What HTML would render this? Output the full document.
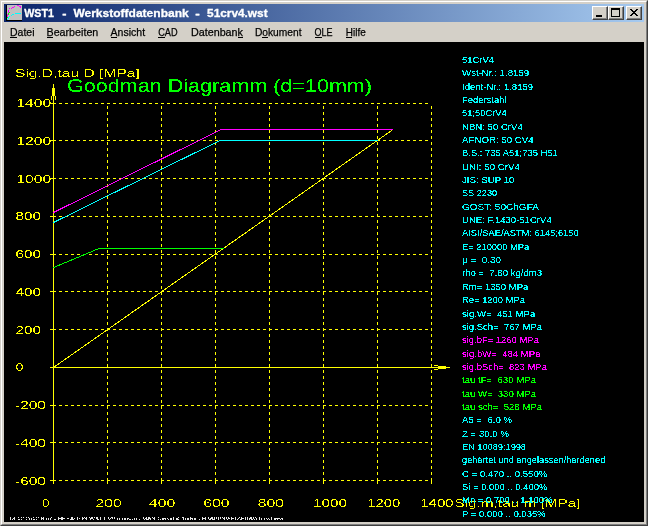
<!DOCTYPE html>
<html><head><meta charset="utf-8"><title>WST1 - Werkstoffdatenbank - 51crv4.wst</title>
<style>
html,body{margin:0;padding:0}
body{width:648px;height:526px;overflow:hidden;background:#d4d0c8;position:relative;font-family:"Liberation Sans",sans-serif}
.frame{position:absolute;left:0;top:0;width:646px;height:524px;border-right:1px solid #404040;border-bottom:1px solid #404040;border-left:1px solid #d4d0c8;border-top:1px solid #d4d0c8;box-sizing:content-box;width:646px;height:524px}
.frame2{position:absolute;left:1px;top:1px;width:644px;height:522px;border-left:1px solid #fff;border-top:1px solid #fff;border-right:1px solid #808080;border-bottom:1px solid #808080}
.title{position:absolute;left:4px;top:4px;width:640px;height:18px;background:linear-gradient(to right,#0a246a,#a6caf0)}
.ttext{position:absolute;left:24px;top:4px;height:18px;line-height:18px;color:#fff;font-weight:bold;font-size:11.5px;white-space:pre;transform-origin:0 50%}
.icon{position:absolute;left:6px;top:5px;width:16px;height:16px}
.btn{position:absolute;top:6px;width:16px;height:14px;background:#d4d0c8;box-sizing:border-box;border-top:1px solid #fff;border-left:1px solid #fff;border-right:1px solid #404040;border-bottom:1px solid #404040}
.btn:after{content:"";position:absolute;left:0;top:0;right:0;bottom:0;border-right:1px solid #808080;border-bottom:1px solid #808080}
.menu{position:absolute;left:4px;top:22px;width:640px;height:20px;background:#d4d0c8}
.mi{position:absolute;top:23px;height:18px;line-height:18px;font-size:11px;color:#000;white-space:nowrap}
.mi u{text-decoration:underline}
.client{position:absolute;left:4px;top:42px;width:640px;height:480px;background:#000}
svg{position:absolute;left:0;top:0}
svg text{font-family:"Liberation Sans",sans-serif;white-space:pre}
</style></head><body>
<div class="frame"></div><div class="frame2"></div>
<div class="title"></div>
<svg class="icon" width="16" height="16" viewBox="0 0 16 16" shape-rendering="crispEdges"><rect x="0" y="0" width="16" height="16" fill="#c0c0c0"/><rect x="0" y="0" width="1" height="16" fill="#000"/><rect x="0" y="15" width="16" height="1" fill="#000"/><rect x="11" y="0" width="2" height="1" fill="#f0f"/><rect x="13" y="1" width="1" height="1" fill="#f0f"/><rect x="14" y="1" width="1" height="2" fill="#f0f"/><rect x="8" y="1" width="1" height="1" fill="#f0f"/><rect x="6" y="2" width="2" height="1" fill="#f0f"/><rect x="5" y="3" width="1" height="1" fill="#f0f"/><rect x="3" y="3" width="1" height="1" fill="#f0f"/><rect x="2" y="5" width="1" height="3" fill="#f0f"/><rect x="1" y="9" width="1" height="3" fill="#f0f"/><rect x="3" y="7" width="1" height="1" fill="#0f0"/><rect x="2" y="8" width="1" height="2" fill="#0f0"/><rect x="1" y="12" width="1" height="1" fill="#0f0"/><rect x="9" y="8" width="6" height="1" fill="#0ff"/><rect x="6" y="9" width="2" height="1" fill="#0ff"/><rect x="5" y="10" width="1" height="1" fill="#0ff"/><rect x="3" y="11" width="1" height="1" fill="#0ff"/><rect x="2" y="12" width="1" height="2" fill="#0ff"/><rect x="1" y="14" width="1" height="1" fill="#0ff"/></svg>
<div class="btn" style="left:592px"><svg width="14" height="12" shape-rendering="crispEdges"><rect x="3" y="8" width="6" height="2" fill="#000"/></svg></div>
<div class="btn" style="left:608px"><svg width="14" height="12" shape-rendering="crispEdges"><rect x="2" y="1" width="8" height="8" fill="none" stroke="#000" stroke-width="1" transform="translate(.5,.5)"/><rect x="2" y="1" width="9" height="2" fill="#000"/></svg></div>
<div class="btn" style="left:626px"><svg width="14" height="12" shape-rendering="crispEdges"><path d="M3 2h2v1h1v1h2v-1h1v-1h2v1h-1v1h-1v1h-1v1h1v1h1v1h1v1h-2v-1h-1v-1h-2v1h-1v1h-2v-1h1v-1h1v-1h1v-1h-1v-1h-1v-1h-1z" fill="#000"/></svg></div>
<div class="menu"></div>

<div class="client"></div>
<svg width="648" height="526" viewBox="0 0 648 526" xml:space="preserve">
<defs><filter id="cr" x="0" y="0" width="100%" height="100%" filterUnits="userSpaceOnUse" color-interpolation-filters="sRGB"><feComponentTransfer><feFuncA type="discrete" tableValues="0 0 0 0 1 1 1 1 1 1"/></feComponentTransfer></filter><filter id="cy" x="0" y="0" width="100%" height="100%" filterUnits="userSpaceOnUse" color-interpolation-filters="sRGB"><feComponentTransfer><feFuncA type="discrete" tableValues="0 0 0 0 0 0 1 1 1 1 1"/></feComponentTransfer></filter><filter id="nf" x="0" y="0" width="100%" height="100%" filterUnits="userSpaceOnUse"><feOffset dx="0" dy="0"/></filter></defs>
<g shape-rendering="crispEdges" stroke-width="1">
<line x1="107.5" y1="106" x2="107.5" y2="481" stroke="#ff0" stroke-dasharray="3 3"/>
<line x1="107.5" y1="480" x2="107.5" y2="484" stroke="#ff0"/>
<line x1="161.5" y1="106" x2="161.5" y2="481" stroke="#ff0" stroke-dasharray="3 3"/>
<line x1="161.5" y1="480" x2="161.5" y2="484" stroke="#ff0"/>
<line x1="215.5" y1="106" x2="215.5" y2="481" stroke="#ff0" stroke-dasharray="3 3"/>
<line x1="215.5" y1="480" x2="215.5" y2="484" stroke="#ff0"/>
<line x1="269.5" y1="106" x2="269.5" y2="481" stroke="#ff0" stroke-dasharray="3 3"/>
<line x1="269.5" y1="480" x2="269.5" y2="484" stroke="#ff0"/>
<line x1="323.5" y1="106" x2="323.5" y2="481" stroke="#ff0" stroke-dasharray="3 3"/>
<line x1="323.5" y1="480" x2="323.5" y2="484" stroke="#ff0"/>
<line x1="377.5" y1="106" x2="377.5" y2="481" stroke="#ff0" stroke-dasharray="3 3"/>
<line x1="377.5" y1="480" x2="377.5" y2="484" stroke="#ff0"/>
<line x1="431.5" y1="106" x2="431.5" y2="481" stroke="#ff0" stroke-dasharray="3 3"/>
<line x1="431.5" y1="480" x2="431.5" y2="484" stroke="#ff0"/>
<line x1="53" y1="480.5" x2="431" y2="480.5" stroke="#ff0" stroke-dasharray="3 3"/>
<line x1="50" y1="480.5" x2="54" y2="480.5" stroke="#ff0"/>
<line x1="53" y1="442.5" x2="431" y2="442.5" stroke="#ff0" stroke-dasharray="3 3"/>
<line x1="50" y1="442.5" x2="54" y2="442.5" stroke="#ff0"/>
<line x1="53" y1="405.5" x2="431" y2="405.5" stroke="#ff0" stroke-dasharray="3 3"/>
<line x1="50" y1="405.5" x2="54" y2="405.5" stroke="#ff0"/>
<line x1="53" y1="329.5" x2="431" y2="329.5" stroke="#ff0" stroke-dasharray="3 3"/>
<line x1="50" y1="329.5" x2="54" y2="329.5" stroke="#ff0"/>
<line x1="53" y1="291.5" x2="431" y2="291.5" stroke="#ff0" stroke-dasharray="3 3"/>
<line x1="50" y1="291.5" x2="54" y2="291.5" stroke="#ff0"/>
<line x1="53" y1="254.5" x2="431" y2="254.5" stroke="#ff0" stroke-dasharray="3 3"/>
<line x1="50" y1="254.5" x2="54" y2="254.5" stroke="#ff0"/>
<line x1="53" y1="216.5" x2="431" y2="216.5" stroke="#ff0" stroke-dasharray="3 3"/>
<line x1="50" y1="216.5" x2="54" y2="216.5" stroke="#ff0"/>
<line x1="53" y1="178.5" x2="431" y2="178.5" stroke="#ff0" stroke-dasharray="3 3"/>
<line x1="50" y1="178.5" x2="54" y2="178.5" stroke="#ff0"/>
<line x1="53" y1="140.5" x2="431" y2="140.5" stroke="#ff0" stroke-dasharray="3 3"/>
<line x1="50" y1="140.5" x2="54" y2="140.5" stroke="#ff0"/>
<line x1="53" y1="103.5" x2="431" y2="103.5" stroke="#ff0" stroke-dasharray="3 3"/>
<line x1="50" y1="103.5" x2="54" y2="103.5" stroke="#ff0"/>
<line x1="53.5" y1="84" x2="53.5" y2="484" stroke="#ff0"/>
<line x1="50" y1="367.5" x2="450" y2="367.5" stroke="#ff0"/>
<rect x="52" y="88" width="3" height="8" fill="#ff0"/>
<rect x="51" y="96" width="1" height="4" fill="#ff0"/><rect x="55" y="96" width="1" height="4" fill="#ff0"/>
<rect x="438" y="366" width="8" height="3" fill="#ff0"/>
<rect x="434" y="365" width="4" height="1" fill="#ff0"/><rect x="434" y="369" width="4" height="1" fill="#ff0"/>
<polyline fill="none" stroke="#ff0" points="53.5,367.5 393,129.5"/>
<polyline fill="none" stroke="#0ff" points="53.5,222.5 220,140.5 377.5,140.5"/>
<polyline fill="none" stroke="#f0f" points="53.5,212.5 221,129.5 393,129.5"/>
<polyline fill="none" stroke="#0f0" points="53.5,267.5 99,248.5 223.5,248.5"/>
</g>
<g filter="url(#nf)">
<text x="10" y="35.7" fill="#000" stroke="#000" stroke-width="0.25" font-size="10.8" textLength="24.5" lengthAdjust="spacingAndGlyphs">Datei</text>
<rect x="10" y="37" width="7" height="1" fill="#000" shape-rendering="crispEdges"/>
<text x="46.5" y="35.7" fill="#000" stroke="#000" stroke-width="0.25" font-size="10.8" textLength="51.8" lengthAdjust="spacingAndGlyphs">Bearbeiten</text>
<rect x="47" y="37" width="6" height="1" fill="#000" shape-rendering="crispEdges"/>
<text x="110.6" y="35.7" fill="#000" stroke="#000" stroke-width="0.25" font-size="10.8" textLength="34.5" lengthAdjust="spacingAndGlyphs">Ansicht</text>
<rect x="111" y="37" width="6" height="1" fill="#000" shape-rendering="crispEdges"/>
<text x="158.2" y="35.7" fill="#000" stroke="#000" stroke-width="0.25" font-size="10.8" textLength="19.4" lengthAdjust="spacingAndGlyphs">CAD</text>
<rect x="158" y="37" width="7" height="1" fill="#000" shape-rendering="crispEdges"/>
<text x="190.9" y="35.7" fill="#000" stroke="#000" stroke-width="0.25" font-size="10.8" textLength="52.1" lengthAdjust="spacingAndGlyphs">Datenbank</text>
<rect x="238" y="37" width="5" height="1" fill="#000" shape-rendering="crispEdges"/>
<text x="254.9" y="35.7" fill="#000" stroke="#000" stroke-width="0.25" font-size="10.8" textLength="46.6" lengthAdjust="spacingAndGlyphs">Dokument</text>
<rect x="262" y="37" width="6" height="1" fill="#000" shape-rendering="crispEdges"/>
<text x="314.5" y="35.7" fill="#000" stroke="#000" stroke-width="0.25" font-size="10.8" textLength="18.1" lengthAdjust="spacingAndGlyphs">OLE</text>
<rect x="315" y="37" width="7" height="1" fill="#000" shape-rendering="crispEdges"/>
<text x="345.8" y="35.7" fill="#000" stroke="#000" stroke-width="0.25" font-size="10.8" textLength="19.9" lengthAdjust="spacingAndGlyphs">Hilfe</text>
<rect x="346" y="37" width="6" height="1" fill="#000" shape-rendering="crispEdges"/>
<text x="24.2" y="17" fill="#fff" stroke="#fff" stroke-width="0.3" font-weight="bold" font-size="11.5" textLength="29.8" lengthAdjust="spacingAndGlyphs">WST1</text>
<text x="62.2" y="17" fill="#fff" stroke="#fff" stroke-width="0.3" font-weight="bold" font-size="11.5" textLength="4.2" lengthAdjust="spacingAndGlyphs">-</text>
<text x="73.4" y="17" fill="#fff" stroke="#fff" stroke-width="0.3" font-weight="bold" font-size="11.5" textLength="115.3" lengthAdjust="spacingAndGlyphs">Werkstoffdatenbank</text>
<text x="195.2" y="17" fill="#fff" stroke="#fff" stroke-width="0.3" font-weight="bold" font-size="11.5" textLength="4.5" lengthAdjust="spacingAndGlyphs">-</text>
<text x="207.1" y="17" fill="#fff" stroke="#fff" stroke-width="0.3" font-weight="bold" font-size="11.5" textLength="60.5" lengthAdjust="spacingAndGlyphs">51crv4.wst</text>
</g>
<g filter="url(#cy)">
<text x="16.2" y="107.0" fill="#ff0" font-size="11.2" textLength="35" lengthAdjust="spacingAndGlyphs">1400</text>
<text x="16.2" y="144.8" fill="#ff0" font-size="11.2" textLength="35" lengthAdjust="spacingAndGlyphs">1200</text>
<text x="16.2" y="182.6" fill="#ff0" font-size="11.2" textLength="35" lengthAdjust="spacingAndGlyphs">1000</text>
<text x="15.5" y="220.3" fill="#ff0" font-size="11.2" textLength="25.6" lengthAdjust="spacingAndGlyphs">800</text>
<text x="15.5" y="258.1" fill="#ff0" font-size="11.2" textLength="25.6" lengthAdjust="spacingAndGlyphs">600</text>
<text x="15.5" y="295.8" fill="#ff0" font-size="11.2" textLength="25.6" lengthAdjust="spacingAndGlyphs">400</text>
<text x="15.5" y="333.6" fill="#ff0" font-size="11.2" textLength="25.6" lengthAdjust="spacingAndGlyphs">200</text>
<text x="15.5" y="371.3" fill="#ff0" font-size="11.2" textLength="8" lengthAdjust="spacingAndGlyphs">0</text>
<text x="15" y="409.1" fill="#ff0" font-size="11.2" textLength="31" lengthAdjust="spacingAndGlyphs">-200</text>
<text x="15" y="446.8" fill="#ff0" font-size="11.2" textLength="31" lengthAdjust="spacingAndGlyphs">-400</text>
<text x="15" y="484.6" fill="#ff0" font-size="11.2" textLength="31" lengthAdjust="spacingAndGlyphs">-600</text>
<text x="42" y="506.7" fill="#ff0" font-size="11.2" textLength="7.4" lengthAdjust="spacingAndGlyphs">0</text>
<text x="95.5" y="506.7" fill="#ff0" font-size="11.2" textLength="26.2" lengthAdjust="spacingAndGlyphs">200</text>
<text x="148.8" y="506.7" fill="#ff0" font-size="11.2" textLength="26.5" lengthAdjust="spacingAndGlyphs">400</text>
<text x="203.2" y="506.7" fill="#ff0" font-size="11.2" textLength="26.5" lengthAdjust="spacingAndGlyphs">600</text>
<text x="257.7" y="506.7" fill="#ff0" font-size="11.2" textLength="26.4" lengthAdjust="spacingAndGlyphs">800</text>
<text x="313" y="506.7" fill="#ff0" font-size="11.2" textLength="34.0" lengthAdjust="spacingAndGlyphs">1000</text>
<text x="367.3" y="506.7" fill="#ff0" font-size="11.2" textLength="33.0" lengthAdjust="spacingAndGlyphs">1200</text>
<text x="420.2" y="506.7" fill="#ff0" font-size="11.2" textLength="33.4" lengthAdjust="spacingAndGlyphs">1400</text>
<text x="454.4" y="506.7" fill="#ff0" font-size="11.4" textLength="126.2" lengthAdjust="spacingAndGlyphs">Sig.m,tau m [MPa]</text>
<text x="15" y="77" fill="#ff0" font-size="11.5" textLength="124.8" lengthAdjust="spacingAndGlyphs">Sig.D,tau D [MPa]</text>
<text x="67" y="91.6" fill="#0f0" stroke="#0f0" stroke-width="0.2" font-size="17.8" textLength="305" lengthAdjust="spacingAndGlyphs">Goodman Diagramm (d=10mm)</text>
</g>
<g filter="url(#cr)">
<text x="462" y="63.0" fill="#0ff" font-size="9.9" textLength="32.0" lengthAdjust="spacingAndGlyphs">51CrV4</text>
<text x="462" y="76.0" fill="#0ff" font-size="9.9" textLength="67.2" lengthAdjust="spacingAndGlyphs">Wst-Nr.: 1.8159</text>
<text x="462" y="90.0" fill="#0ff" font-size="9.9" textLength="71.1" lengthAdjust="spacingAndGlyphs">Ident-Nr.: 1.8159</text>
<text x="462" y="103.0" fill="#0ff" font-size="9.9" textLength="44.5" lengthAdjust="spacingAndGlyphs">Federstahl</text>
<text x="462" y="116.0" fill="#0ff" font-size="9.9" textLength="44.8" lengthAdjust="spacingAndGlyphs">51;50CrV4</text>
<text x="462" y="130.0" fill="#0ff" font-size="9.9" textLength="60.8" lengthAdjust="spacingAndGlyphs">NBN: 50 CrV4</text>
<text x="462" y="143.0" fill="#0ff" font-size="9.9" textLength="71.7" lengthAdjust="spacingAndGlyphs">AFNOR: 50 CV4</text>
<text x="462" y="156.0" fill="#0ff" font-size="9.9" textLength="95.8" lengthAdjust="spacingAndGlyphs">B.S.: 735 A51;735 H51</text>
<text x="462" y="170.0" fill="#0ff" font-size="9.9" textLength="58.0" lengthAdjust="spacingAndGlyphs">UNI: 50 CrV4</text>
<text x="462" y="183.0" fill="#0ff" font-size="9.9" textLength="52.5" lengthAdjust="spacingAndGlyphs">JIS: SUP 10</text>
<text x="462" y="196.0" fill="#0ff" font-size="9.9" textLength="35.1" lengthAdjust="spacingAndGlyphs">SS 2230</text>
<text x="462" y="210.0" fill="#0ff" font-size="9.9" textLength="76.9" lengthAdjust="spacingAndGlyphs">GOST: 50ChGFA</text>
<text x="462" y="223.0" fill="#0ff" font-size="9.9" textLength="89.7" lengthAdjust="spacingAndGlyphs">UNE: F.1430-51CrV4</text>
<text x="462" y="236.0" fill="#0ff" font-size="9.9" textLength="116.7" lengthAdjust="spacingAndGlyphs">AISI/SAE/ASTM: 6145;6150</text>
<text x="462" y="250.0" fill="#0ff" font-size="9.9" textLength="67.2" lengthAdjust="spacingAndGlyphs">E= 210000 MPa</text>
<text x="462" y="263.0" fill="#0ff" font-size="9.9" textLength="39.0" lengthAdjust="spacingAndGlyphs">µ =  0.30</text>
<text x="462" y="276.0" fill="#0ff" font-size="9.9" textLength="80.0" lengthAdjust="spacingAndGlyphs">rho =  7.80 kg/dm3</text>
<text x="462" y="290.0" fill="#0ff" font-size="9.9" textLength="66.3" lengthAdjust="spacingAndGlyphs">Rm= 1350 MPa</text>
<text x="462" y="303.0" fill="#0ff" font-size="9.9" textLength="63.0" lengthAdjust="spacingAndGlyphs">Re= 1200 MPa</text>
<text x="462" y="317.0" fill="#0ff" font-size="9.9" textLength="73.3" lengthAdjust="spacingAndGlyphs">sig.W=  451 MPa</text>
<text x="462" y="330.0" fill="#0ff" font-size="9.9" textLength="80.0" lengthAdjust="spacingAndGlyphs">sig.Sch=  767 MPa</text>
<text x="462" y="343.0" fill="#f0f" font-size="9.9" textLength="76.9" lengthAdjust="spacingAndGlyphs">sig.bF= 1260 MPa</text>
<text x="462" y="357.0" fill="#f0f" font-size="9.9" textLength="78.5" lengthAdjust="spacingAndGlyphs">sig.bW=  484 MPa</text>
<text x="462" y="370.0" fill="#f0f" font-size="9.9" textLength="84.9" lengthAdjust="spacingAndGlyphs">sig.bSch=  823 MPa</text>
<text x="462" y="383.0" fill="#0f0" font-size="9.9" textLength="74.0" lengthAdjust="spacingAndGlyphs">tau tF=  630 MPa</text>
<text x="462" y="397.0" fill="#0f0" font-size="9.9" textLength="74.0" lengthAdjust="spacingAndGlyphs">tau W=  330 MPa</text>
<text x="462" y="410.0" fill="#0f0" font-size="9.9" textLength="80.0" lengthAdjust="spacingAndGlyphs">tau sch=  528 MPa</text>
<text x="462" y="423.0" fill="#0ff" font-size="9.9" textLength="50.2" lengthAdjust="spacingAndGlyphs">A5 =  6.0 %</text>
<text x="462" y="437.0" fill="#0ff" font-size="9.9" textLength="47.0" lengthAdjust="spacingAndGlyphs">Z = 30.0 %</text>
<text x="462" y="450.0" fill="#0ff" font-size="9.9" textLength="64.0" lengthAdjust="spacingAndGlyphs">EN 10089:1998</text>
<text x="462" y="463.0" fill="#0ff" font-size="9.9" textLength="143.3" lengthAdjust="spacingAndGlyphs">gehärtet und angelassen/hardened</text>
<text x="462" y="477.0" fill="#0ff" font-size="9.9" textLength="85.4" lengthAdjust="spacingAndGlyphs">C = 0.470 .. 0.550%</text>
<text x="462" y="490.0" fill="#0ff" font-size="9.9" textLength="85.4" lengthAdjust="spacingAndGlyphs">Si = 0.000 .. 0.400%</text>
<text x="462" y="503.0" fill="#0ff" font-size="9.9" textLength="90.6" lengthAdjust="spacingAndGlyphs">Mn = 0.700 .. 1.100%</text>
<text x="462" y="517.0" fill="#0ff" font-size="9.9" textLength="83.7" lengthAdjust="spacingAndGlyphs">P = 0.000 .. 0.035%</text>
<text x="9" y="520.3" fill="#e8e8e8" font-size="4.1" textLength="274" lengthAdjust="spacingAndGlyphs">14.12.2012 8:07 - HEXAGON WST1 V9.0 000-0 - MAN Diesel &amp; Turbo - H:\APPS\FED\FBA\51crv4.wst</text>
</g>
</svg>
</body></html>
